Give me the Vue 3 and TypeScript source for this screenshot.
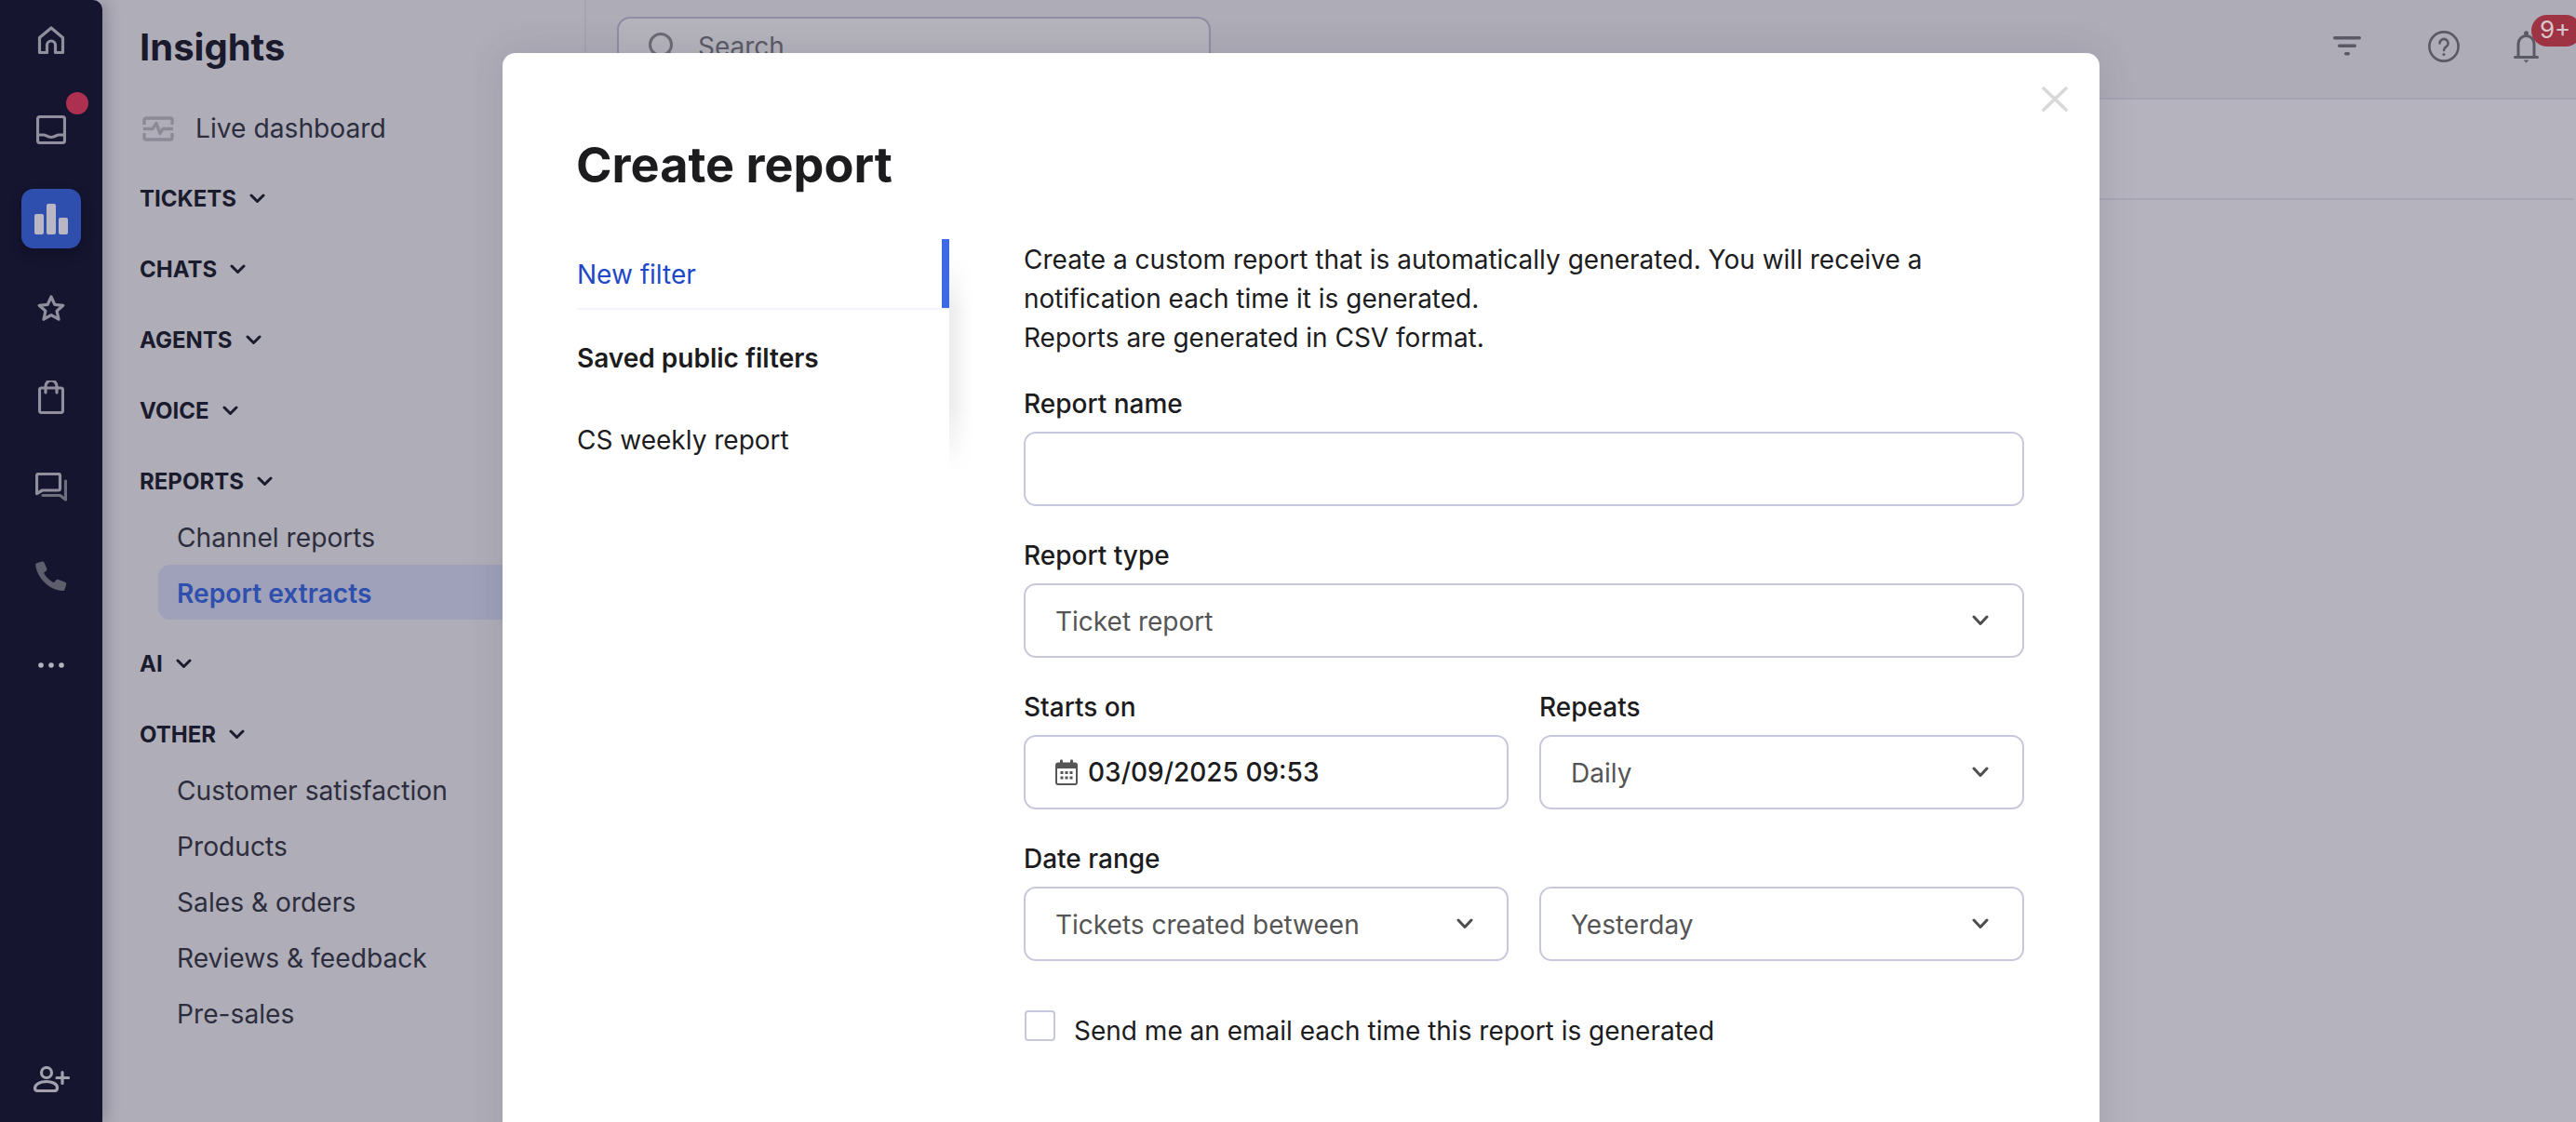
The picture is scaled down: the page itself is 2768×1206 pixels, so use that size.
<script setup lang="ts">
interface Section { title: string; items: string[]; active?: string }
const sections: Section[] = [
  { title: 'TICKETS', items: [] },
  { title: 'CHATS', items: [] },
  { title: 'AGENTS', items: [] },
  { title: 'VOICE', items: [] },
  { title: 'REPORTS', items: ['Channel reports', 'Report extracts'], active: 'Report extracts' },
  { title: 'AI', items: [] },
  { title: 'OTHER', items: ['Customer satisfaction', 'Products', 'Sales & orders', 'Reviews & feedback', 'Pre-sales'] },
]
</script>

<template>
  <div class="page">
    <nav class="rail">
      <div class="slot">
        <svg width="30" height="31" viewBox="0 0 30 31" fill="none" class="ic"><path d="M2.500 28.500V12.500L15 2l12.500 10.500V28.500H19.500V20.500a4.500 4.500 0 0 0-9 0V28.500Z" /></svg>
      </div>
      <div class="slot">
        <svg width="32" height="31" viewBox="0 0 32 31" fill="none" class="ic"><rect x="1.500" y="1.500" width="29" height="28" rx="2.500" /><path d="M1.500 21H8c2.500 0 3.500 2.500 8 2.500s5.500-2.500 8-2.500h6.500" /></svg>
        <span class="dot"></span>
      </div>
      <div class="slot slot-active">
        <svg width="36" height="33" viewBox="0 0 36 33" fill="#b9b7c4"><rect x="0" y="11" width="10" height="22" rx="2" /><rect x="13" y="0" width="10" height="33" rx="2" /><rect x="26" y="15" width="10" height="18" rx="2" /></svg>
      </div>
      <div class="slot">
        <svg width="30" height="29" viewBox="0 0 30 29" fill="none" class="ic"><path d="M15 2l3.800 8.300 9 1-6.700 6 1.900 8.900L15 21.700l-8 4.500 1.900-8.900-6.700-6 9-1Z" /></svg>
      </div>
      <div class="slot">
        <svg width="28" height="36" viewBox="0 0 28 36" fill="none" class="ic"><rect x="1.500" y="8" width="25" height="26.500" rx="2" /><path d="M8 13V6a6 6 0 0 1 12 0v7" /></svg>
      </div>
      <div class="slot">
        <svg width="34" height="31" viewBox="0 0 34 31" fill="none" class="ic"><path d="M1.500 3.300a2 2 0 0 1 2-2h21a2 2 0 0 1 2 2V17a2 2 0 0 1-2 2H7.500l-6 3.500Z" /><path d="M8 24.500h18.500l6 4.500V9" stroke="#6f6e7c" /></svg>
      </div>
      <div class="slot">
        <svg width="34" height="33" viewBox="0 0 34 33" fill="#5f5e6d"><path d="M1 2.500 7 .5c1.200-.3 2 .2 2.500 1.200l2.800 6.300c.4 1 .2 1.800-.6 2.500L9 12.800c2.200 4.300 6.500 8.500 11 10.500l2.300-2.800c.7-.8 1.600-1 2.500-.6l7.200 2.900c1 .5 1.500 1.300 1.200 2.400l-1.700 5.300c-.3 1-1 1.500-2 1.500C15.500 31.800 1.200 17.500.2 3.700c0-.5.300-1 .8-1.200Z" /></svg>
      </div>
      <div class="slot">
        <svg width="28" height="6" viewBox="0 0 28 6" fill="#b5b3bd"><circle cx="3" cy="3" r="2.800" /><circle cx="14" cy="3" r="2.800" /><circle cx="25" cy="3" r="2.800" /></svg>
      </div>
      <div class="slot slot-bottom">
        <svg width="39" height="28" viewBox="0 0 39 28" fill="none" class="ic ic-light"><circle cx="14" cy="7" r="5.500" /><path d="M1.500 24c0-4.500 5-7.500 12.500-7.500 3 0 5.800.6 8 1.700 2.300 1.200 3.500 3 3.500 4.800 0 2-1 3.500-3 3.500H4.500c-2 0-3-1-3-2.500Z" /><path d="M31 6.500v12M25 12.500h12.500" /></svg>
      </div>
    </nav>

    <aside class="side">
      <h2 class="side-title">Insights</h2>
      <div class="live">
        <svg width="34" height="27" viewBox="0 0 34 27" fill="none" class="live-ic"><path d="M2 9V4a2 2 0 0 1 2-2h26a2 2 0 0 1 2 2v5M2 18v5a2 2 0 0 0 2 2h26a2 2 0 0 0 2-2v-5" /><path d="M1 13.500h10l4-6 4 11 3-5h11" /></svg>
        <span>Live dashboard</span>
      </div>
      <div class="sections">
        <section v-for="s in sections" :key="s.title" class="section">
          <div class="section-head">
            <span>{{ s.title }}</span>
            <svg width="17" height="11" viewBox="0 0 17 11" fill="none" class="chev-s"><path d="M2 2l6.500 6.500L15 2" /></svg>
          </div>
          <div
            v-for="it in s.items"
            :key="it"
            class="sub"
            :class="{ 'sub-active': it === s.active }"
          >{{ it }}</div>
        </section>
      </div>
    </aside>

    <main class="main">
      <header class="top">
        <div class="search">
          <svg width="30" height="30" viewBox="0 0 30 30" fill="none" class="search-ic"><circle cx="13" cy="13" r="11.500" /><path d="M22 22l6 6" /></svg>
          <span>Search</span>
        </div>
        <div class="top-icons">
          <svg width="30" height="21" viewBox="0 0 30 21" fill="#5a5966"><rect x="0" y="0" width="30" height="3.400" rx="1.700" /><rect x="5" y="8.500" width="20" height="3.400" rx="1.700" /><rect x="12" y="17" width="6" height="3.400" rx="1.700" /></svg>
          <svg width="34" height="34" viewBox="0 0 34 34" fill="none" class="help"><circle cx="17" cy="17" r="15.600" /><path d="M12.600 13.500a4.500 4.500 0 1 1 7 3.700c-1.600 1.100-2.600 2-2.600 3.800" /><circle cx="17" cy="25.500" r="1.500" fill="#5a5966" stroke="none" /></svg>
          <div class="bell">
            <svg width="27" height="35" viewBox="0 0 27 35" fill="none" class="bell-ic"><path d="M5 28V14a8.500 8.500 0 0 1 17 0v14M1.500 28.500h24" /><circle cx="13.500" cy="2.800" r="2.500" fill="#5a5966" stroke="none" /><path d="M10.500 31.500h6l-3 3Z" fill="#5a5966" stroke="none" /></svg>
            <span class="badge">9+</span>
          </div>
        </div>
      </header>
      <div class="tabs-row"></div>
    </main>

    <div class="modal">
      <svg width="28" height="27" viewBox="0 0 28 27" fill="none" class="close"><path d="M2 2l24 23M26 2 2 25" /></svg>
      <h1 class="modal-title">Create report</h1>
      <div class="modal-body">
        <div class="filters">
          <div class="filter-new"><div class="filter-new-in">New filter</div></div>
          <div class="filter-head">Saved public filters</div>
          <div class="filter-item">CS weekly report</div>
        </div>
        <form class="form">
          <p class="desc">Create a custom report that is automatically generated. You will receive a<br />notification each time it is generated.<br />Reports are generated in CSV format.</p>
          <div class="field">
            <label class="label">Report name</label>
            <div class="ctl"></div>
          </div>
          <div class="field">
            <label class="label">Report type</label>
            <div class="ctl ctl-select">
              <span>Ticket report</span>
              <svg width="18" height="12" viewBox="0 0 18 12" fill="none" class="chev"><path d="M2 2l7 7.500L16 2" /></svg>
            </div>
          </div>
          <div class="two">
            <div class="field">
              <label class="label">Starts on</label>
              <div class="ctl ctl-date">
                <svg width="24" height="28" viewBox="0 0 24 28" fill="none" class="cal"><rect x="1" y="4.500" width="22" height="22.500" rx="2" stroke="#555" stroke-width="2" /><path d="M1 4.500h22V10H1Z" fill="#555" /><rect x="5" y="0.500" width="3" height="6" rx="1" fill="#555" /><rect x="16" y="0.500" width="3" height="6" rx="1" fill="#555" /><g fill="#555"><rect x="5.500" y="13" width="3" height="3" /><rect x="10.500" y="13" width="3" height="3" /><rect x="15.500" y="13" width="3" height="3" /><rect x="5.500" y="18.500" width="3" height="3" /><rect x="10.500" y="18.500" width="3" height="3" /><rect x="15.500" y="18.500" width="3" height="3" /></g></svg>
                <span>03/09/2025 09:53</span>
              </div>
            </div>
            <div class="field">
              <label class="label">Repeats</label>
              <div class="ctl ctl-select">
                <span>Daily</span>
                <svg width="18" height="12" viewBox="0 0 18 12" fill="none" class="chev"><path d="M2 2l7 7.500L16 2" /></svg>
              </div>
            </div>
          </div>
          <div class="field">
            <label class="label">Date range</label>
            <div class="two">
              <div class="ctl ctl-select">
                <span>Tickets created between</span>
                <svg width="18" height="12" viewBox="0 0 18 12" fill="none" class="chev"><path d="M2 2l7 7.500L16 2" /></svg>
              </div>
              <div class="ctl ctl-select">
                <span>Yesterday</span>
                <svg width="18" height="12" viewBox="0 0 18 12" fill="none" class="chev"><path d="M2 2l7 7.500L16 2" /></svg>
              </div>
            </div>
          </div>
          <div class="check-row">
            <span class="check"></span>
            <span class="check-text">Send me an email each time this report is generated</span>
          </div>
        </form>
      </div>
    </div>
  </div>
</template>

<style>
html, body { margin: 0; padding: 0; background: #b5b3bd; }
</style>

<style scoped>
* { box-sizing: border-box; }
.page {
  position: relative;
  display: flex;
  width: 2768px;
  height: 1206px;
  overflow: hidden;
  background: #b5b3bd;
  font-family: Inter, "Noto Sans", sans-serif;
  font-size: 28px;
  color: #1c1c1e;
}
.rail {
  flex: none;
  width: 110px;
  height: 1206px;
  background: #15152f;
  border-top-right-radius: 10px;
  box-shadow: 6px 0 14px rgba(40, 38, 70, 0.22);
  position: relative;
  z-index: 2;
  display: flex;
  flex-direction: column;
  align-items: center;
  padding: 11px 0 14px;
  gap: 32px;
}
.slot {
  position: relative;
  flex: none;
  width: 64px;
  height: 64px;
  display: flex;
  align-items: center;
  justify-content: center;
}
.slot-active {
  background: #2f4fae;
  border-radius: 13px;
  box-shadow: 0 6px 12px rgba(10, 10, 30, 0.35);
}
.slot-bottom { margin-top: auto; }
.ic { stroke: #918f9d; stroke-width: 3.200; stroke-linejoin: round; stroke-linecap: round; }
.ic-light { stroke: #a2a1ad; }
.dot {
  position: absolute;
  left: 48px;
  top: -8px;
  width: 24px;
  height: 24px;
  border-radius: 50%;
  background: #ae3050;
}
.side {
  flex: none;
  width: 520px;
  height: 1206px;
  background: #afadb8;
  border-right: 2px solid #a6a4b3;
  padding-left: 40px;
  color: #2d2d3d;
}
.side-title {
  margin: 0;
  height: 102px;
  line-height: 102px;
  font-size: 40px;
  font-weight: 700;
  color: #1a1a2c;
}
.live {
  height: 72px;
  display: flex;
  align-items: center;
  gap: 23px;
  margin-bottom: 8px;
  margin-left: 3px;
  font-size: 28.200px;
  line-height: 1;
}
.live-ic { stroke: #8b8a96; stroke-width: 3.400; stroke-linejoin: round; }
.sections { display: flex; flex-direction: column; gap: 14px; }
.section-head {
  height: 62px;
  display: flex;
  align-items: center;
  gap: 14px;
  font-size: 24px;
  font-weight: 700;
  color: #1b1b2e;
}
.chev-s { stroke: #1b1b2e; stroke-width: 3; stroke-linecap: round; stroke-linejoin: round; }
.sub {
  height: 60px;
  line-height: 60px;
  margin-left: 40px;
  font-size: 28.200px;
  white-space: nowrap;
}
.sub-active {
  margin-left: 20px;
  padding-left: 20px;
  border-radius: 13px 0 0 13px;
  background: #9ea1b9;
  color: #2f4fae;
  font-weight: 600;
  height: 59px;
  line-height: 62px;
  margin-top: -1px;
  margin-bottom: 2px;
}
.main { flex: 1; display: flex; flex-direction: column; }
.top {
  position: relative;
  height: 107px;
  background: #aeacb7;
  border-bottom: 2px solid #a5a3b2;
  display: flex;
  justify-content: space-between;
  padding: 18px 0 0 33px;
}
.search {
  width: 638px;
  height: 64px;
  border: 2px solid #8f8da6;
  border-radius: 14px;
  background: #b5b3bc;
  display: flex;
  align-items: center;
  gap: 23px;
  padding: 0 0 0 32px;
  line-height: 34px;
  color: #5b5a66;
}
.search-ic { stroke: #6c6b76; stroke-width: 3; }
.top-icons { position: relative; display: flex; align-items: flex-start; width: 0; }
.top-icons > svg, .bell { position: absolute; }
.top-icons > svg:nth-child(1) { left: -261px; top: 21px; }
.top-icons > svg:nth-child(2) { left: -159px; top: 15px; }
.help { stroke: #5a5966; stroke-width: 2.600; stroke-linecap: round; }
.bell { left: -67px; top: 15px; width: 67px; height: 35px; }
.bell-ic { stroke: #5a5966; stroke-width: 3; stroke-linecap: round; display: block; }
.badge {
  position: absolute;
  left: 19px;
  top: -17px;
  width: 54px;
  height: 34px;
  border-radius: 17px;
  background: #9e3343;
  color: #d9c6cb;
  font-size: 26px;
  line-height: 32px;
  padding-left: 9px;
  white-space: nowrap;
}
.tabs-row {
  height: 108px;
  border-bottom: 2px solid #a8a6b5;
  margin-right: 3px;
}
.modal {
  position: absolute;
  left: 540px;
  top: 57px;
  width: 1716px;
  height: 1200px;
  background: #fff;
  border-radius: 14px;
  padding: 90px 0 0 80px;
  box-shadow: 0 0 40px rgba(60, 56, 80, 0.14);
  z-index: 5;
}
.close {
  position: absolute;
  left: 1654px;
  top: 36px;
  stroke: #d8d8d8;
  stroke-width: 3.600;
  stroke-linecap: round;
}
.modal-title {
  margin: 0 0 0 -1px;
  font-size: 52.200px;
  line-height: 60px;
  font-weight: 700;
  color: #1c1c1e;
}
.modal-body {
  display: flex;
  align-items: flex-start;
  margin-top: 50px;
  gap: 80px;
}
.filters {
  position: relative;
  flex: none;
  width: 400px;
}
.filters::after {
  content: "";
  position: absolute;
  left: 100%;
  top: 20px;
  bottom: 0;
  width: 24px;
  background: linear-gradient(to right, rgba(60, 60, 80, 0.1), rgba(60, 60, 80, 0));
  -webkit-mask-image: linear-gradient(to bottom, transparent, #000 25%, #000 70%, transparent);
  mask-image: linear-gradient(to bottom, transparent, #000 25%, #000 70%, transparent);
}
.filter-new { border-bottom: 2px solid #f3f3f9; }
.filter-new-in {
  height: 74px;
  line-height: 76px;
  color: #1e48c8;
  border-right: 8px solid #3e69e6;
}
.filter-head {
  margin-top: 8px;
  height: 88px;
  line-height: 88px;
  font-weight: 600;
}
.filter-item {
  margin-top: 9px;
  height: 70px;
  line-height: 70px;
}
.form { width: 1075px; padding-top: 1px; display: flex; flex-direction: column; gap: 35px; }
.desc { margin: 0 0 -3px; line-height: 42px; }
.field { display: flex; flex-direction: column; min-width: 0; }
.label { height: 34px; line-height: 36px; margin-bottom: 14px; font-weight: 500; }
.ctl {
  flex: none;
  height: 80px;
  border: 2px solid #c8c8dd;
  border-radius: 13px;
  background: #fff;
  display: flex;
  align-items: center;
}
.ctl-select {
  justify-content: space-between;
  padding: 0 36px 0 32px;
  color: #555;
}
.ctl-select > span { padding-top: 2px; }
.ctl-date { gap: 11px; padding-left: 32px; font-weight: 450; }
.chev { stroke: #4d4d4d; stroke-width: 3; stroke-linecap: round; stroke-linejoin: round; }
.two { display: flex; gap: 33px; }
.two > .field, .two > .ctl { flex: 1 1 0; min-width: 0; }
.check-row {
  display: flex;
  align-items: flex-start;
  gap: 20px;
  margin-top: 18px;
}
.check {
  flex: none;
  width: 33px;
  height: 33px;
  margin-left: 1px;
  border: 2px solid #c8c8dd;
  border-radius: 4px;
}
.check-text { line-height: 42px; margin-top: 1px; }
</style>
